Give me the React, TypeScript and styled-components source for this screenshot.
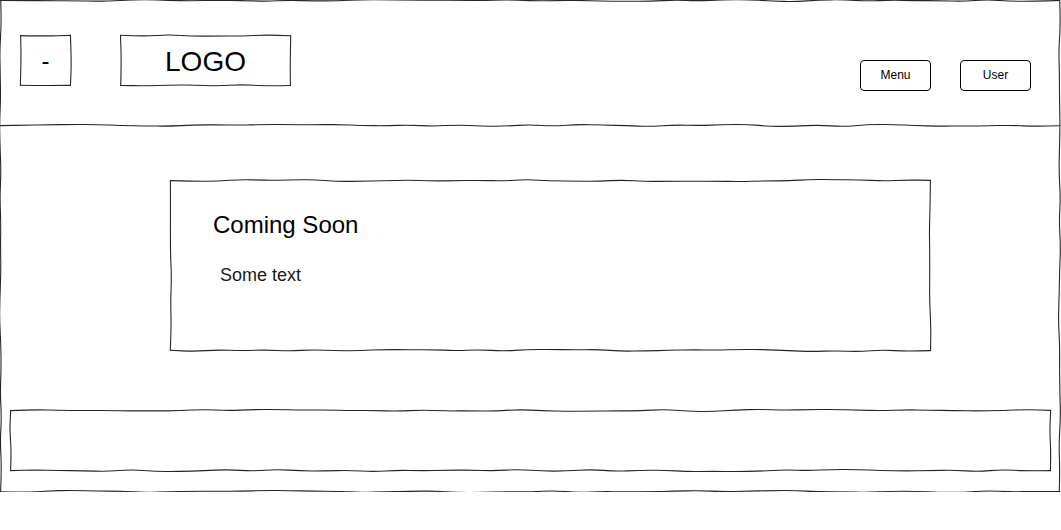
import React from "react";
import styled, { createGlobalStyle } from "styled-components";

const GlobalStyle = createGlobalStyle`
  html, body {
    margin: 0;
    padding: 0;
    background: #ffffff;
  }
  body {
    font-family: "Liberation Sans", Arial, Helvetica, sans-serif;
    color: #000000;
  }
`;

// small seeded random so the hand drawn wobble stays the same between renders
function makeRand(seed: number) {
  let s = seed;
  return () => {
    s = (s + 0x6d2b79f5) | 0;
    let t = Math.imul(s ^ (s >>> 15), 1 | s);
    t = (t + Math.imul(t ^ (t >>> 7), 61 | t)) ^ t;
    return ((t ^ (t >>> 14)) >>> 0) / 4294967296;
  };
}

function wobble(x1: number, y1: number, x2: number, y2: number, rand: () => number) {
  const dx = x2 - x1;
  const dy = y2 - y1;
  const len = Math.hypot(dx, dy);
  const n = Math.max(2, Math.round(len / 24));
  const nx = -dy / len;
  const ny = dx / len;
  const pts: [number, number][] = [];
  for (let i = 0; i <= n; i++) {
    const t = i / n;
    const off = i === 0 || i === n ? (rand() - 0.5) * 0.6 : (rand() - 0.5) * 2.4;
    pts.push([x1 + dx * t + nx * off, y1 + dy * t + ny * off]);
  }
  let d = `M${pts[0][0].toFixed(2)},${pts[0][1].toFixed(2)}`;
  for (let i = 1; i < n; i++) {
    const mx = (pts[i][0] + pts[i + 1][0]) / 2;
    const my = (pts[i][1] + pts[i + 1][1]) / 2;
    d += ` Q${pts[i][0].toFixed(2)},${pts[i][1].toFixed(2)} ${mx.toFixed(2)},${my.toFixed(2)}`;
  }
  d += ` L${pts[n][0].toFixed(2)},${pts[n][1].toFixed(2)}`;
  return d;
}

const Overlay = styled.svg`
  position: absolute;
  top: 0;
  left: 0;
  overflow: visible;
  pointer-events: none;
  path {
    fill: none;
    stroke: #262626;
    stroke-width: 1.1;
    stroke-linecap: round;
  }
`;

function Sketch({ w, h, seed, sides = "trbl" }: { w: number; h: number; seed: number; sides?: string }) {
  const r = makeRand(seed);
  const a = 0.5;
  const bx = w - 0.5;
  const by = h - 0.5;
  const paths: string[] = [];
  if (sides.includes("t")) paths.push(wobble(a, a, bx, a, r));
  if (sides.includes("r")) paths.push(wobble(bx, a, bx, by, r));
  if (sides.includes("b")) paths.push(wobble(bx, by, a, by, r));
  if (sides.includes("l")) paths.push(wobble(a, by, a, a, r));
  return (
    <Overlay width={w} height={h} aria-hidden="true">
      {paths.map((d, i) => (
        <path key={i} d={d} />
      ))}
    </Overlay>
  );
}

const Frame = styled.div`
  position: relative;
  box-sizing: border-box;
  width: 1060px;
  height: 492px;
  display: flex;
  flex-direction: column;
`;

const Header = styled.header`
  position: relative;
  box-sizing: border-box;
  height: 126px;
  padding: 35px 29px 0 20px;
  display: flex;
  align-items: flex-start;
`;

const Box = styled.div<{ $w: number; $size: number }>`
  position: relative;
  box-sizing: border-box;
  width: ${(p) => p.$w}px;
  height: 51px;
  display: flex;
  align-items: center;
  justify-content: center;
  padding-top: 1px;
  font-size: ${(p) => p.$size}px;
  line-height: 1;
`;

const Logo = styled(Box)`
  margin-left: 49px;
  padding-top: 2px;
`;

const Nav = styled.nav`
  margin-left: auto;
  margin-top: 25px;
  display: flex;
  gap: 29px;
`;

const NavButton = styled.button`
  box-sizing: border-box;
  width: 71px;
  height: 31px;
  border: 1px solid #000000;
  border-radius: 4px;
  background: #ffffff;
  font-family: "Liberation Sans", Arial, sans-serif;
  font-size: 12px;
  color: #000000;
  padding: 0 0 1px;
  cursor: pointer;
`;

const Main = styled.main`
  padding: 54px 0 0 170px;
`;

const Card = styled.section`
  position: relative;
  box-sizing: border-box;
  width: 761px;
  height: 171px;
  padding: 33px 0 0 43px;
`;

const Title = styled.h2`
  margin: 0;
  font-size: 24px;
  font-weight: normal;
  line-height: 24px;
`;

const Body = styled.p`
  margin: 29px 0 0 7px;
  font-size: 18px;
  line-height: 18px;
  color: #1a1a1a;
`;

const Footer = styled.footer`
  position: relative;
  box-sizing: border-box;
  margin: 59px 0 0 10px;
  width: 1041px;
  height: 61px;
`;

export default function App() {
  return (
    <>
      <GlobalStyle />
      <Frame>
        <Sketch w={1060} h={492} seed={11} />
        <Header>
          <Sketch w={1060} h={126} seed={23} sides="b" />
          <Box $w={51} $size={24}>
            <Sketch w={51} h={51} seed={5} />
            -
          </Box>
          <Logo $w={171} $size={28}>
            <Sketch w={171} h={51} seed={9} />
            LOGO
          </Logo>
          <Nav>
            <NavButton>Menu</NavButton>
            <NavButton>User</NavButton>
          </Nav>
        </Header>
        <Main>
          <Card>
            <Sketch w={761} h={171} seed={31} />
            <Title>Coming Soon</Title>
            <Body>Some text</Body>
          </Card>
        </Main>
        <Footer>
          <Sketch w={1041} h={61} seed={47} />
        </Footer>
      </Frame>
    </>
  );
}
